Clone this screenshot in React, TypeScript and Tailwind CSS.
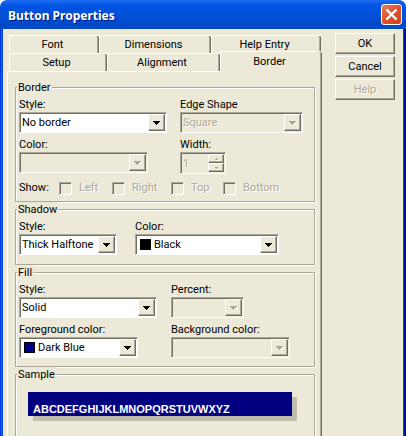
import type { ReactNode } from "react";

const raised =
  "border border-t-white border-l-white border-r-[#716f64] border-b-[#716f64] shadow-[inset_-1px_-1px_0_#aca899]";
const sunken =
  "border border-t-[#aca899] border-l-[#aca899] border-r-white border-b-white shadow-[inset_1px_1px_0_#716f64]";
const disabledText = "disabled:text-[#aca899] disabled:[text-shadow:1px_1px_0_#fff]";

function Arrow({ disabled }: { disabled?: boolean }) {
  return (
    <svg width="9" height="6" viewBox="0 0 9 6" shapeRendering="crispEdges" aria-hidden="true">
      {disabled && <path d="M2 2h7v1h-1v1h-1v1h-1v1h-1v-1h-1v-1h-1v-1h-1z" fill="#fff" />}
      <path d="M1 1h7v1h-1v1h-1v1h-1v1h-1v-1h-1v-1h-1v-1h-1z" fill={disabled ? "#aca899" : "#000"} />
    </svg>
  );
}

type ComboProps = {
  id: string;
  label: string;
  width: string;
  options: string[];
  swatch?: string;
  disabled?: boolean;
};

function Combo({ id, label, width, options, swatch, disabled }: ComboProps) {
  return (
    <div className="flex flex-col items-start">
      <label htmlFor={id} className="pt-px whitespace-nowrap">
        {label}
      </label>
      <div className={`relative h-[21px] ${width} ${sunken} ${disabled ? "" : "bg-white"}`}>
        <select
          id={id}
          disabled={disabled}
          className={`block h-full w-full appearance-none bg-transparent pt-px pr-5 leading-4 outline-none disabled:opacity-100 ${disabledText} ${swatch ? "pl-[18px]" : "pl-[2px]"}`}
        >
          {options.map((o) => (
            <option key={o}>{o}</option>
          ))}
        </select>
        {swatch && (
          <span className={`pointer-events-none absolute top-1 left-1 size-[11px] border border-black ${swatch}`} />
        )}
        <span
          className={`pointer-events-none absolute top-px right-px bottom-px flex w-[17px] items-center justify-center bg-[#ece9d8] ${raised}`}
        >
          <Arrow disabled={disabled} />
        </span>
      </div>
    </div>
  );
}

function Group({ title, className, children }: { title: string; className?: string; children?: ReactNode }) {
  return (
    <fieldset
      className={`min-w-0 border border-[#aca899] px-[3px] shadow-[1px_1px_0_#fff,inset_1px_1px_0_#fff] ${className ?? ""}`}
    >
      <legend className="-ml-[2px] bg-[#ece9d8] px-px pt-[2px] leading-3">{title}</legend>
      {children}
    </fieldset>
  );
}

function Tab({ children, active, className }: { children: ReactNode; active?: boolean; className: string }) {
  return (
    <button
      type="button"
      role="tab"
      aria-selected={!!active}
      className={`rounded-t-[2px] border-t border-l border-white bg-[#ece9d8] pr-1 shadow-[inset_-1px_0_0_#716f64,inset_-2px_0_0_#aca899] ${className}`}
    >
      {children}
    </button>
  );
}

function Check({ id, label, className }: { id: string; label: string; className: string }) {
  return (
    <div className={`flex items-center gap-[7px] ${className}`}>
      <input id={id} type="checkbox" disabled className={`size-[13px] appearance-none ${sunken}`} />
      <label htmlFor={id} className="text-[#aca899] [text-shadow:1px_1px_0_#fff]">
        {label}
      </label>
    </div>
  );
}

function Spin({ up, label }: { up?: boolean; label: string }) {
  return (
    <button
      type="button"
      disabled
      aria-label={label}
      className={`flex w-4 flex-1 items-center justify-center ${raised}`}
    >
      <svg width="5" height="4" viewBox="0 0 5 4" shapeRendering="crispEdges" aria-hidden="true">
        <path d={up ? "M2 1h1v1h1v1h-3v-1h1z" : "M1 1h3v1h-1v1h-1v-1h-1z"} fill="#aca899" />
        <path d="M2 3h3v1h-3z" fill="#fff" />
      </svg>
    </button>
  );
}

function SideButton({ children, disabled }: { children: ReactNode; disabled?: boolean }) {
  return (
    <button type="button" disabled={disabled} className={`h-[21px] w-full ${raised} ${disabledText}`}>
      {children}
    </button>
  );
}

export default function App() {
  return (
    <div className="bg-white">
      <div
        role="dialog"
        aria-labelledby="title"
        className="flex min-h-screen flex-col overflow-hidden rounded-t-[7px] bg-[#ece9d8] font-[Roboto,sans-serif] text-[11px] leading-[14px] text-black"
      >
        <header className="flex h-[29px] items-center justify-between bg-linear-to-b from-[#1c6cf0] via-[#0054e3] via-20% to-[#0148c4] pr-[4px] pl-2">
          <h1
            id="title"
            className="pt-[2px] font-['Noto_Sans',sans-serif] text-[12px] leading-5 font-bold text-white [text-shadow:1px_1px_0_#0a1883]"
          >
            Button Properties
          </h1>
          <button
            type="button"
            aria-label="Close"
            className="flex size-[21px] items-center justify-center rounded-[3px] border border-white bg-linear-to-br from-[#e8795a] via-[#e2502f] to-[#cc4418]"
          >
            <svg width="15" height="15" viewBox="0 0 15 15" aria-hidden="true">
              <path d="M2.5 2.5l10 10M12.5 2.5l-10 10" stroke="#fff" strokeWidth="2.4" />
            </svg>
          </button>
        </header>

        <main className="flex flex-1 gap-[13px] pr-[11px] pl-[7px] shadow-[inset_1px_0_0_#0038d8,inset_2px_0_0_#1466ee,inset_3px_0_0_#0044cc,inset_-2px_0_0_#00138c,inset_-3px_0_0_#0046d8]">
          <section className="flex min-w-0 flex-1 flex-col pt-[6px]">
            <div role="tablist" aria-label="Properties">
              <div className="flex h-[18px] pr-px pl-[2px]">
                <Tab className="w-[90px]">Font</Tab>
                <Tab className="w-[112px]">Dimensions</Tab>
                <Tab className="flex-1">Help Entry</Tab>
              </div>
              <div className="flex h-[18px] pl-[2px]">
                <Tab className="w-[98px]">Setup</Tab>
                <Tab className="w-[113px]">Alignment</Tab>
                <Tab active className="relative z-10 -mt-[2px] -mb-px flex-1">
                  Border
                </Tab>
              </div>
            </div>

            <div
              role="tabpanel"
              className="flex flex-1 flex-col border-t border-l border-white px-[7px] pt-2 shadow-[inset_-1px_0_0_#716f64,inset_-2px_0_0_#aca899]"
            >
              <Group title="Border" className="pt-[3px] pb-[6px]">
                <div className="grid grid-cols-[161px_1fr] gap-y-1">
                  <Combo id="border-style" label="Style:" width="w-[148px]" options={["No border"]} />
                  <Combo id="edge" label="Edge Shape" width="w-[123px]" options={["Square"]} disabled />
                  <Combo id="border-color" label="Color:" width="w-[129px]" options={[""]} disabled />
                  <div className="flex flex-col items-start">
                    <label htmlFor="border-width" className="pt-px">
                      Width:
                    </label>
                    <div className={`flex h-[22px] w-[46px] p-px ${sunken}`}>
                      <input
                        id="border-width"
                        disabled
                        defaultValue="1"
                        className={`w-0 min-w-0 flex-1 pt-px pl-px ${disabledText}`}
                      />
                      <div className="flex flex-col">
                        <Spin up label="Increase width" />
                        <Spin label="Decrease width" />
                      </div>
                    </div>
                  </div>
                </div>
                <div className="flex items-center pt-[7px]">
                  <span className="w-10">Show:</span>
                  <Check id="left" label="Left" className="w-[53px]" />
                  <Check id="right" label="Right" className="w-[59px]" />
                  <Check id="top" label="Top" className="w-[52px]" />
                  <Check id="bottom" label="Bottom" className="" />
                </div>
              </Group>

              <Group title="Shadow" className="pt-[3px] pb-[9px]">
                <div className="grid grid-cols-[116px_1fr]">
                  <Combo id="shadow-style" label="Style:" width="w-[98px]" options={["Thick Halftone"]} />
                  <Combo id="shadow-color" label="Color:" width="w-[144px]" options={["Black"]} swatch="bg-black" />
                </div>
              </Group>

              <Group title="Fill" className="pt-[3px] pb-2">
                <div className="grid grid-cols-[152px_1fr] gap-y-1">
                  <Combo id="fill-style" label="Style:" width="w-[138px]" options={["Solid"]} />
                  <Combo id="percent" label="Percent:" width="w-[73px]" options={[""]} disabled />
                  <Combo
                    id="foreground"
                    label="Foreground color:"
                    width="w-[119px]"
                    options={["Dark Blue"]}
                    swatch="bg-[#000080]"
                  />
                  <Combo id="background" label="Background color:" width="w-[119px]" options={[""]} disabled />
                </div>
              </Group>

              <Group title="Sample" className="flex-1 border-b-0">
                <div className="mt-[11px] mr-[19px] ml-[9px] flex h-6 items-end bg-[#000080] pl-[5px] font-['Liberation_Sans',Arial,sans-serif] text-[11px] leading-[14px] font-bold text-white shadow-[5px_5px_0_#c0bdaf]">
                  ABCDEFGHIJKLMNOPQRSTUVWXYZ
                </div>
              </Group>
            </div>
          </section>

          <div className="flex w-[60px] flex-col gap-[2px] pt-1">
            <SideButton>OK</SideButton>
            <SideButton>Cancel</SideButton>
            <SideButton disabled>Help</SideButton>
          </div>
        </main>
      </div>
    </div>
  );
}
